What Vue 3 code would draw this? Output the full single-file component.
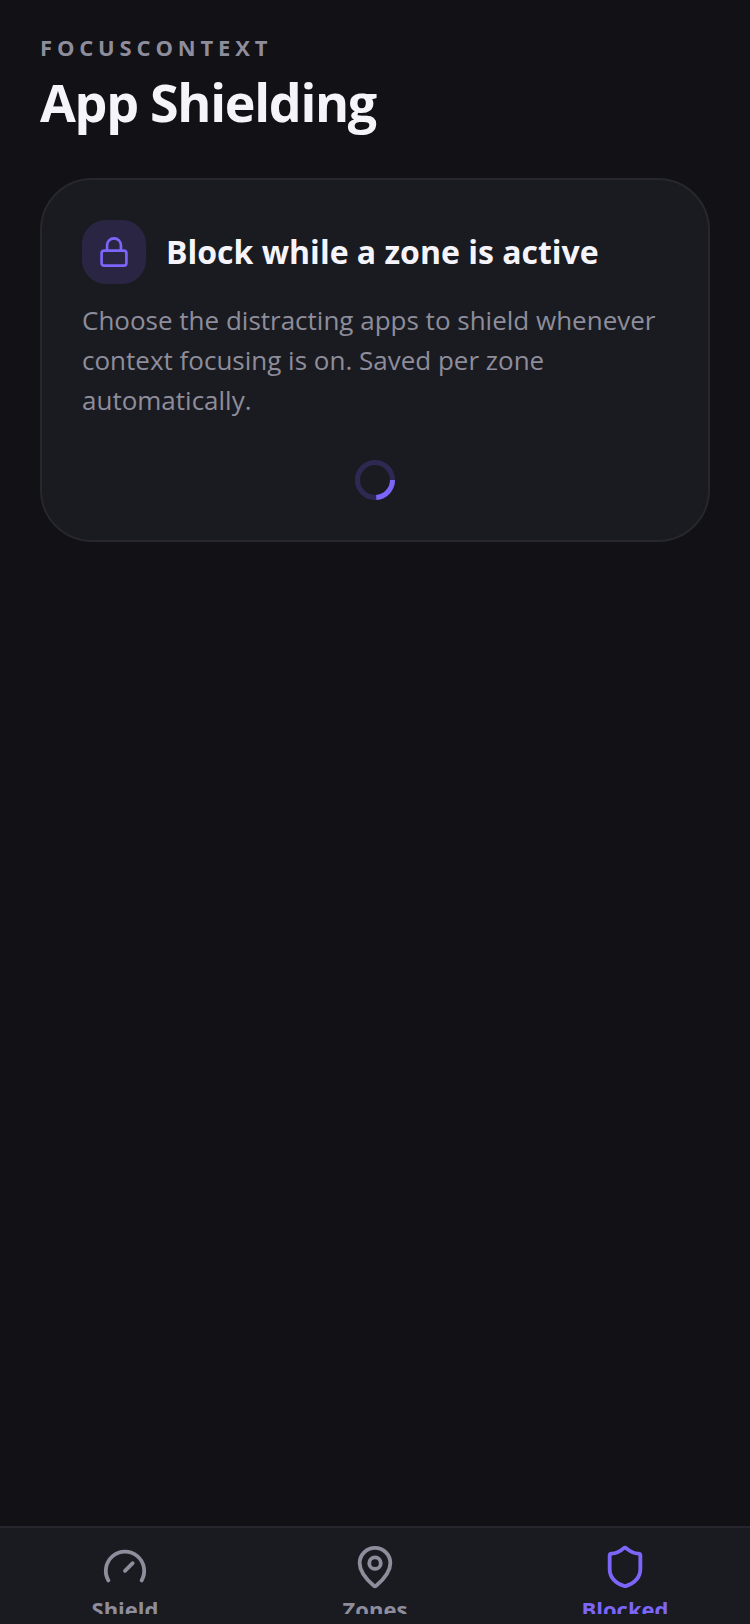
<script setup>
import { ref } from 'vue'

const tabs = [
  {
    id: 'shield',
    label: 'Shield',
    paths: ['m12 14 4-4', 'M3.34 19a10 10 0 1 1 17.32 0'],
  },
  {
    id: 'zones',
    label: 'Zones',
    paths: [
      'M20 10c0 4.993-5.539 10.193-7.399 11.799a1 1 0 0 1-1.202 0C9.539 20.193 4 14.993 4 10a8 8 0 0 1 16 0',
      'M15 10a3 3 0 1 1-6 0a3 3 0 1 1 6 0',
    ],
  },
  {
    id: 'blocked',
    label: 'Blocked',
    paths: [
      'M20 13c0 5-3.5 7.5-7.66 8.95a1 1 0 0 1-.67-.01C7.5 20.5 4 18 4 13V6a1 1 0 0 1 1-1c2 0 4.5-1.2 6.24-2.72a1.17 1.17 0 0 1 1.52 0C14.51 3.81 17 5 19 5a1 1 0 0 1 1 1z',
    ],
  },
]
const active = ref('blocked')
</script>

<template>
  <div class="app">
    <header class="header">
      <p class="eyebrow">FOCUSCONTEXT</p>
      <h1 class="title">App Shielding</h1>
    </header>

    <main class="content">
      <section class="card" aria-labelledby="card-title">
        <div class="card-head">
          <span class="badge">
            <svg class="badge-icon" viewBox="0 0 24 24" aria-hidden="true">
              <rect x="2.7" y="11" width="18.6" height="11.2" rx="2" />
              <path d="M6.8 11V7a5.2 5.2 0 0 1 10.4 0v4" />
            </svg>
          </span>
          <h2 id="card-title" class="card-title">Block while a zone is active</h2>
        </div>
        <p class="card-text">
          Choose the distracting apps to shield whenever context focusing is on. Saved per zone
          automatically.
        </p>
        <svg class="spinner" viewBox="0 0 40 40" role="status" aria-label="Loading">
          <circle class="spinner-track" cx="20" cy="20" r="17.5" />
          <circle class="spinner-arc" cx="20" cy="20" r="17.5" />
        </svg>
      </section>
    </main>

    <nav class="tabs" aria-label="Main">
      <button
        v-for="tab in tabs"
        :key="tab.id"
        type="button"
        class="tab"
        :class="{ active: tab.id === active }"
        :aria-current="tab.id === active ? 'page' : undefined"
        @click="active = tab.id"
      >
        <svg class="tab-icon" viewBox="0 0 24 24" aria-hidden="true">
          <path v-for="d in tab.paths" :key="d" :d="d" />
        </svg>
        <span class="tab-label">{{ tab.label }}</span>
      </button>
    </nav>
  </div>
</template>

<style>
body {
  background: #111116;
}
</style>

<style scoped>
.app {
  display: flex;
  flex-direction: column;
  height: 100vh;
  background: #111116;
  color: #f5f4fb;
  font-family: "Open Sans", "Noto Sans", sans-serif;
}

.header {
  padding: 32px 40px 0;
}

.eyebrow {
  margin: 0;
  color: #8e8d9c;
  font-size: 22px;
  font-weight: 700;
  line-height: 30px;
  letter-spacing: 0.22em;
}

.title {
  margin: 8px 0 0;
  font-size: 52px;
  font-weight: 700;
  line-height: 64px;
  letter-spacing: -0.025em;
}

.content {
  flex: 1;
  min-height: 0;
  padding: 44px 40px;
  overflow: hidden;
}

.card {
  display: flex;
  flex-direction: column;
  padding: 40px;
  border: 2px solid #27272d;
  border-radius: 52px;
  background: #1a1b20;
}

.card-head {
  display: flex;
  align-items: center;
  gap: 20px;
}

.badge {
  display: grid;
  flex: none;
  place-items: center;
  width: 64px;
  height: 64px;
  border-radius: 24px;
  background: #2a2543;
}

.badge-icon {
  width: 32px;
  height: 32px;
  fill: none;
  stroke: #7c66f9;
  stroke-width: 2;
  stroke-linecap: round;
  stroke-linejoin: round;
}

.card-title {
  margin: 0;
  font-size: 32px;
  font-weight: 700;
  line-height: 44px;
}

.card-text {
  margin: 16px 0 0;
  color: #8e8d9c;
  font-size: 26px;
  line-height: 40px;
}

.spinner {
  align-self: center;
  width: 40px;
  height: 40px;
  margin-top: 40px;
  fill: none;
  stroke-width: 5;
}

.spinner-track {
  stroke: #2f2852;
}

.spinner-arc {
  stroke: #7c66f9;
  stroke-dasharray: 26 84;
}

.tabs {
  display: grid;
  grid-template-columns: repeat(3, 1fr);
  flex: none;
  padding: 16px 0 10px;
  border-top: 2px solid #26262f;
  background: #1a1b20;
}

.tab {
  display: flex;
  flex-direction: column;
  align-items: center;
  gap: 4px;
  height: 70px;
  padding: 0;
  border: 0;
  background: none;
  color: #8e8d9c;
  font: inherit;
  overflow: hidden;
  cursor: pointer;
}

.tab.active {
  color: #7c66f9;
}

.tab-icon {
  flex: none;
  width: 46px;
  height: 46px;
  fill: none;
  stroke: currentColor;
  stroke-width: 2;
  stroke-linecap: round;
  stroke-linejoin: round;
}

.tab-label {
  font-size: 22px;
  font-weight: 700;
  line-height: 30px;
}
</style>
